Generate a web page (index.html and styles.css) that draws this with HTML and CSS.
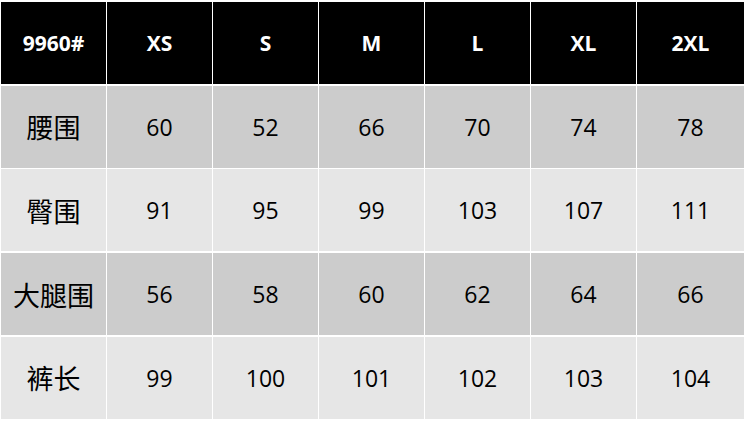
FILE: index.html
```html
<!DOCTYPE html>
<html lang="zh">
<head>
<meta charset="utf-8">
<link rel="stylesheet" href="styles.css">
</head>
<body>
<div class="table">
  <div class="cell head">9960#</div><div class="cell head">XS</div><div class="cell head">S</div><div class="cell head">M</div><div class="cell head">L</div><div class="cell head">XL</div><div class="cell head">2XL</div>
  <div class="cell dark cjk">腰围</div><div class="cell dark">60</div><div class="cell dark">52</div><div class="cell dark">66</div><div class="cell dark">70</div><div class="cell dark">74</div><div class="cell dark">78</div>
  <div class="cell light cjk">臀围</div><div class="cell light">91</div><div class="cell light">95</div><div class="cell light">99</div><div class="cell light">103</div><div class="cell light">107</div><div class="cell light">111</div>
  <div class="cell dark cjk">大腿围</div><div class="cell dark">56</div><div class="cell dark">58</div><div class="cell dark">60</div><div class="cell dark">62</div><div class="cell dark">64</div><div class="cell dark">66</div>
  <div class="cell light cjk">裤长</div><div class="cell light">99</div><div class="cell light">100</div><div class="cell light">101</div><div class="cell light">102</div><div class="cell light">103</div><div class="cell light">104</div>
</div>
</body>
</html>
```
FILE: styles.css
```css
html, body { margin: 0; padding: 0; background: #fff; }
body { width: 744px; height: 422px; overflow: hidden; }
.table {
  display: grid;
  grid-template-columns: repeat(6, 105px) 107px;
  grid-template-rows: repeat(5, 82px);
  column-gap: 1px;
  row-gap: 1.7px;
  padding: 2px 0 0 1px;
}
.cell {
  display: flex;
  align-items: center;
  justify-content: center;
  font-family: "Open Sans", "Noto Sans CJK SC", sans-serif;
  font-size: 23px;
  color: #000;
}
.head { background: #000; color: #fff; font-weight: 700; font-size: 21px; }
.dark { background: #cccccc; }
.light { background: #e6e6e6; }
.cjk { font-family: "Noto Sans CJK SC", sans-serif; font-size: 27px; }
```
